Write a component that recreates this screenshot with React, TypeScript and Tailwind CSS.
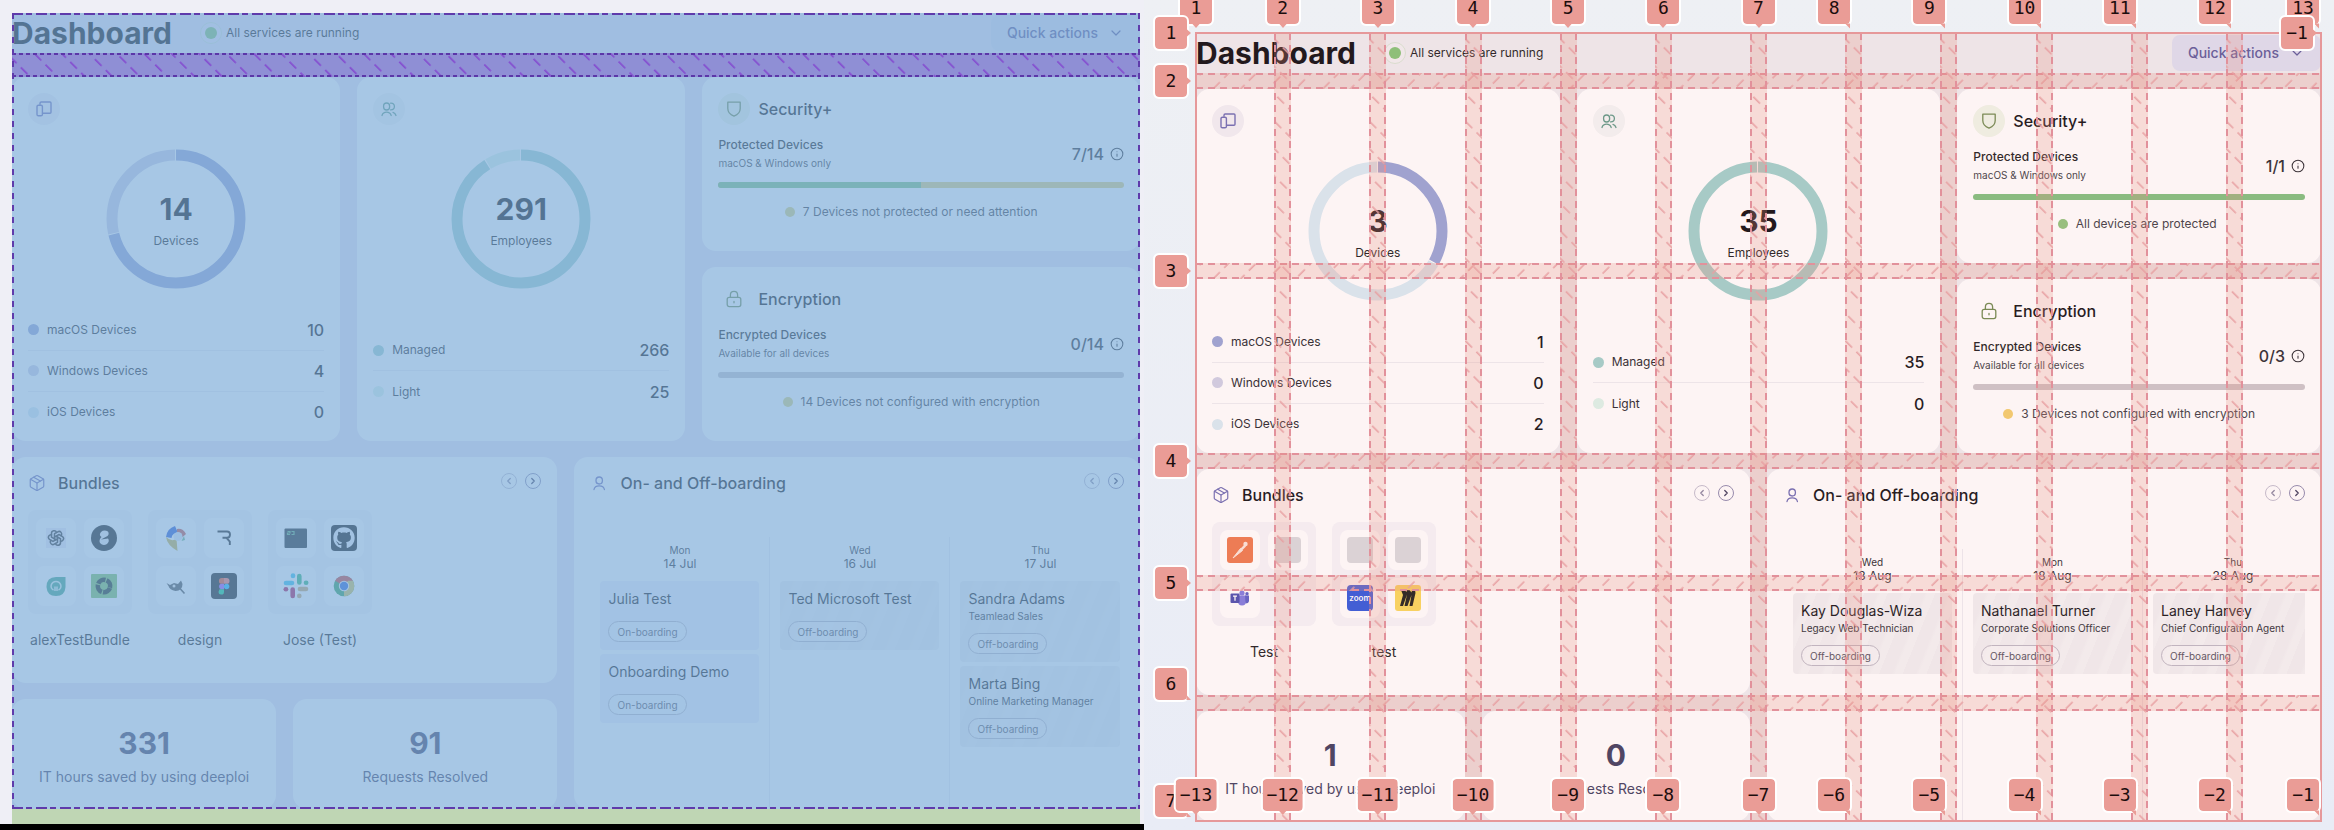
import React, { useId } from "react";
import { ChevronDown, ChevronLeft, ChevronRight, Info, Package } from "lucide-react";
import { FaGithub } from "react-icons/fa";
import { TbBrandOpenai } from "react-icons/tb";

/* ---------- icons ---------- */

const DevicesIcon = () => (
  <svg viewBox="0 0 18 18" className="size-[18px]" fill="none" stroke="#6f6db5" strokeWidth="1.4" strokeLinejoin="round" strokeLinecap="round">
    <path d="M5 4.2V3.2Q5 2 6.2 2H15Q16 2 16 3V12.2Q16 13.2 15 13.2H7.6" />
    <rect x="2" y="5.2" width="5.4" height="10.6" rx="1.4" />
  </svg>
);

const PeopleIcon = () => (
  <svg viewBox="0 0 18 18" className="size-[18px]" fill="none" stroke="#5f9a88" strokeWidth="1.3" strokeLinecap="round">
    <rect x="3.6" y="3" width="6" height="7" rx="3" />
    <path d="M10.6 3.2Q14.4 3 14.4 6.5Q14.4 10 10.6 9.9" />
    <path d="M2 15.5Q3 12.2 6.6 12.2Q10 12.2 11.2 15.5M13 12.4Q15.2 13 16 15.5" />
  </svg>
);

const ShieldIcon = () => (
  <svg viewBox="0 0 18 18" className="size-[18px]" fill="none" stroke="#6f8a4f" strokeWidth="1.3" strokeLinejoin="round">
    <path d="M2.8 2.2H15.2V8.4Q15.2 13.6 9 16.2Q2.8 13.6 2.8 8.4Z" />
  </svg>
);

const LockIcon = () => (
  <svg viewBox="0 0 18 18" className="size-[18px]" fill="none" stroke="#6f8a4f" strokeWidth="1.3" strokeLinecap="round">
    <rect x="2.2" y="7.4" width="13.6" height="9.2" rx="2" />
    <path d="M5.4 7.2V5Q5.4 1.4 9 1.4Q12.6 1.4 12.6 5V7.2M9 11.4V12.8" />
  </svg>
);

const PersonIcon = () => (
  <svg viewBox="0 0 18 18" className="size-[18px]" fill="none" stroke="#6f6db5" strokeWidth="1.3" strokeLinecap="round">
    <rect x="6" y="3" width="6.4" height="7" rx="3.2" />
    <path d="M4 15.5Q4.6 11.8 9.2 11.8Q13.8 11.8 14.4 15.5" />
  </svg>
);

/* ---------- app logos ---------- */

const Svg = ({ children }: { children: React.ReactNode }) => (
  <svg viewBox="0 0 26 26" className="size-[26px]">{children}</svg>
);

const logos: Record<string, React.ReactNode> = {
  openai: (
    <span className="flex size-5 items-center justify-center bg-[#eceaf5]"><TbBrandOpenai className="size-[18px] text-[#333]" /></span>
  ),
  knot: (
    <Svg>
      <circle cx="13" cy="13" r="13" fill="#151515" />
      <path d="M17 6.5Q13 4.5 10 7Q7.500 10 10.500 12Q7.500 15 9 18Q12 21.500 16 19Q19 16 17 13.500L10 14.500L16.500 11Q18.500 9 17 6.500Z" fill="#e9e9ef" />
    </Svg>
  ),
  leaf: (
    <Svg>
      <path d="M3.500 14Q3.500 4 13 4H22.500V14Q22 23 13 23Q4 23 3.500 14Z" fill="#3fa38b" />
      <path d="M10.500 17Q7.500 15.500 8.200 12Q9.500 8.500 13 8.500Q16.500 8.500 17.800 12Q18.500 15.500 15.500 17M12 18V13.500M14 18V13.500" fill="none" stroke="#d9f1ea" strokeWidth="1.500" />
    </Svg>
  ),
  ring: (
    <Svg>
      <rect y="1" width="26" height="24" rx="1" fill="#7cc060" />
      <circle cx="13" cy="13" r="6.200" fill="none" stroke="#1a2a1d" strokeWidth="4.600" strokeDasharray="8.500 1.240" transform="rotate(18 13 13)" />
    </Svg>
  ),
  drop: (
    <Svg>
      <path d="M3 12Q4 3.500 12 1L15 8Q9 8 8.500 13Z" fill="#2a5bd7" />
      <path d="M14 4Q20 3 23 9L19 12.500L14 8Z" fill="#c8524a" />
      <path d="M3 12Q8 17 13.500 14L14.500 26Q4 20 3 12Z" fill="#c9b44c" />
      <circle cx="15" cy="11.500" r="4.500" fill="#dfe8f5" />
      <path d="M21 11L22 15L18.500 16Z" fill="#6fb68a" />
    </Svg>
  ),
  r: (
    <Svg>
      <path d="M6.500 6.500H16Q19 6.500 19 9.500Q19 12.800 16 12.800H11.500M15.500 12.800L18.800 16.500V20" fill="none" stroke="#1d1d1d" strokeWidth="1.900" />
    </Svg>
  ),
  gimp: (
    <Svg>
      <path d="M3.500 10L7 12L11 10L15 11L18 7.500L19.500 11Q19.500 17.500 12.500 18Q6.500 17 5.500 13Z" fill="#4c4c4c" />
      <circle cx="11" cy="13" r="1.500" fill="#eee" />
      <path d="M17 15.500L21.500 20.500" stroke="#4c4c4c" strokeWidth="1.600" />
    </Svg>
  ),
  figma: (
    <Svg>
      <rect width="26" height="26" rx="4" fill="#151515" />
      <path d="M13 5H10.800A2.900 2.900 0 0 0 10.800 10.800H13Z" fill="#f24e1e" />
      <path d="M13 5H15.600A2.900 2.900 0 0 1 15.600 10.800H13Z" fill="#ff7262" />
      <path d="M13 10.800H10.800A2.700 2.700 0 0 0 10.800 16.200H13Z" fill="#a259ff" />
      <circle cx="15.600" cy="13.500" r="2.700" fill="#1abcfe" />
      <path d="M13 16.200H10.800A2.700 2.700 0 1 0 13 18.900Z" fill="#0acf83" />
    </Svg>
  ),
  terminal: (
    <Svg>
      <rect x="1.500" y="3.500" width="22.500" height="19.500" rx="1" fill="#1f2426" />
      <path d="M4.500 6.500H7V8H4.500V9.500H7M8.500 6.500H11V9.500H8.500" fill="none" stroke="#5fae7b" strokeWidth="1.200" />
    </Svg>
  ),
  github: (
    <span className="flex size-[26px] items-center justify-center rounded bg-[#111]"><FaGithub className="size-[22px] text-[#f1f1f6]" /></span>
  ),
  slack: (
    <Svg>
      <g strokeWidth="4.600" strokeLinecap="round">
        <path d="M3 10H9" stroke="#36c5f0" />
        <path d="M10 2.600V3" stroke="#36c5f0" />
        <path d="M16.300 3V9.500" stroke="#2eb67d" />
        <path d="M23.200 9.700H23" stroke="#2eb67d" />
        <path d="M17 16H23" stroke="#c9a56a" />
        <path d="M16.300 23V22.800" stroke="#c9a56a" />
        <path d="M9.700 16.500V23" stroke="#b01555" />
        <path d="M2.800 16.200H3" stroke="#b01555" />
      </g>
    </Svg>
  ),
  chrome: (
    <Svg>
      <circle cx="13" cy="13" r="10.300" fill="#2f9e5b" />
      <path d="M4.100 7.850A10.300 10.300 0 0 1 21.900 7.850L13 13Z" fill="#cf4238" />
      <path d="M21.900 7.850A10.300 10.300 0 0 1 13 23.300L13 13L17 7.850Z" fill="#d6c35a" />
      <circle cx="13" cy="13" r="5.200" fill="#f4f4fa" />
      <circle cx="13" cy="13" r="4.200" fill="#2a63dd" />
    </Svg>
  ),
  postman: (
    <Svg>
      <rect width="26" height="26" rx="3" fill="#ee7a4f" />
      <path d="M6 21L13.500 11.500L15.500 13.500Z" fill="#fbe6dc" stroke="#fbe6dc" strokeLinejoin="round" />
      <path d="M13.200 12L17.500 7.500L19 9.500L15 13.500Z" fill="#fbe6dc" />
      <circle cx="18.500" cy="7" r="2.200" fill="#fbe6dc" />
    </Svg>
  ),
  blank: <span className="size-[26px] rounded bg-[#dadadd]" />,
  teams: (
    <Svg>
      <circle cx="15" cy="8" r="2.600" fill="#7f7ce0" />
      <circle cx="20" cy="8.800" r="1.700" fill="#5b5fc7" />
      <path d="M11 10.500H19V16Q19 20.500 15 20.500Q11 20.500 11 16Z" fill="#7f7ce0" />
      <path d="M18 10.500H22V16Q21.500 18.500 18.500 18.500Z" fill="#5b5fc7" />
      <rect x="3.500" y="8.500" width="9" height="9.500" rx="1" fill="#4b4fb0" />
      <path d="M6 11.200H10M8 11.200V15.800" stroke="#fff" strokeWidth="1.300" />
    </Svg>
  ),
  zoom: (
    <span className="flex size-[26px] items-center justify-center rounded bg-[#3059dc] text-[8px] font-semibold text-white">zoom</span>
  ),
  miro: (
    <Svg>
      <rect width="26" height="26" rx="3" fill="#fad85c" />
      <path d="M6 5H9.500L11.500 7L12 5H14.500L16.500 7.500L17 5H20L20.500 8L17.500 21H14.500L16.500 10L12.500 21H9.500L12 9.500L8 21H5L8 10Z" fill="#20201c" />
    </Svg>
  ),
};

/* ---------- dashboard data ---------- */

type Segment = { label: string; value: number; color: string };
type Employee = { name: string; role?: string; kind: "On-boarding" | "Off-boarding" };
type Coverage = { title: string; label: string; hint: string; ratio: string; share: number; track: string; dot: string; note: string };
type Data = {
  columns: string;
  lower: string;
  devices: Segment[];
  people: Segment[];
  security: Coverage;
  encryption: Coverage;
  bundles: { name: string; apps: (string | null)[] }[];
  days: { day: string; date: string; entries: Employee[] }[];
  hours: number;
  resolved: number;
};

const devices = (mac: number, win: number, ios: number): Segment[] => [
  { label: "macOS Devices", value: mac, color: "#98a4d6" },
  { label: "Windows Devices", value: win, color: "#cfd0e6" },
  { label: "iOS Devices", value: ios, color: "#d8ebf4" },
];
const people = (managed: number, light: number): Segment[] => [
  { label: "Managed", value: managed, color: "#a0d1cc" },
  { label: "Light", value: light, color: "#dcf4ea" },
];

const large: Data = {
  columns: "grid-cols-[3fr_3fr_4fr]",
  lower: "grid-cols-[545fr_565fr]",
  devices: devices(10, 4, 0),
  people: people(266, 25),
  security: { title: "Security+", label: "Protected Devices", hint: "macOS & Windows only", ratio: "7/14", share: 50, track: "bg-[#e0cf7c]", dot: "bg-[#dcd27c]", note: "7 Devices not protected or need attention" },
  encryption: { title: "Encryption", label: "Encrypted Devices", hint: "Available for all devices", ratio: "0/14", share: 0, track: "bg-[#c6c3c9]", dot: "bg-[#dcd27c]", note: "14 Devices not configured with encryption" },
  bundles: [
    { name: "alexTestBundle", apps: ["openai", "knot", "leaf", "ring"] },
    { name: "design", apps: ["drop", "r", "gimp", "figma"] },
    { name: "Jose (Test)", apps: ["terminal", "github", "slack", "chrome"] },
  ],
  days: [
    { day: "Mon", date: "14 Jul", entries: [{ name: "Julia Test", kind: "On-boarding" }, { name: "Onboarding Demo", kind: "On-boarding" }] },
    { day: "Wed", date: "16 Jul", entries: [{ name: "Ted Microsoft Test", kind: "Off-boarding" }] },
    { day: "Thu", date: "17 Jul", entries: [{ name: "Sandra Adams", role: "Teamlead Sales", kind: "Off-boarding" }, { name: "Marta Bing", role: "Online Marketing Manager", kind: "Off-boarding" }] },
  ],
  hours: 331,
  resolved: 91,
};

const small: Data = {
  columns: "grid-cols-3",
  lower: "grid-cols-2",
  devices: devices(1, 0, 2),
  people: people(35, 0),
  security: { title: "Security+", label: "Protected Devices", hint: "macOS & Windows only", ratio: "1/1", share: 100, track: "bg-[#8fc47c]", dot: "bg-[#8fc47c]", note: "All devices are protected" },
  encryption: { title: "Encryption", label: "Encrypted Devices", hint: "Available for all devices", ratio: "0/3", share: 0, track: "bg-[#ccc6ca]", dot: "bg-[#f3cf6c]", note: "3 Devices not configured with encryption" },
  bundles: [
    { name: "Test", apps: ["postman", "blank", "teams", null] },
    { name: "test", apps: ["blank", "blank", "zoom", "miro"] },
  ],
  days: [
    { day: "Wed", date: "13 Aug", entries: [{ name: "Kay Douglas-Wiza", role: "Legacy Web Technician", kind: "Off-boarding" }] },
    { day: "Mon", date: "18 Aug", entries: [{ name: "Nathanael Turner", role: "Corporate Solutions Officer", kind: "Off-boarding" }] },
    { day: "Thu", date: "28 Aug", entries: [{ name: "Laney Harvey", role: "Chief Configuration Agent", kind: "Off-boarding" }] },
  ],
  hours: 1,
  resolved: 0,
};

/* ---------- dashboard parts ---------- */

function Donut({ segments, label }: { segments: Segment[]; label: string }) {
  const total = segments.reduce((sum, s) => sum + s.value, 0);
  let start = 0;
  return (
    <div className="relative mx-auto size-[140px]">
      <svg viewBox="0 0 140 140" className="size-full -rotate-90">
        {segments.filter((s) => s.value > 0).map((s) => {
          const from = start;
          const share = (s.value / total) * 100;
          start += share;
          return (
            <circle key={s.label} cx="70" cy="70" r="64" fill="none" stroke={s.color} strokeWidth="11" pathLength="100" strokeDasharray={`${share - 0.25} 100`} strokeDashoffset={-from} />
          );
        })}
      </svg>
      <div className="absolute inset-0 flex flex-col items-center justify-center">
        <span className="text-[30px] leading-10 font-bold text-[#0c0c10]">{total}</span>
        <span className="mt-1 text-[12px] leading-4 text-[#1b1b20]">{label}</span>
      </div>
    </div>
  );
}

function DonutCard({ segments, label, icon, tint }: { segments: Segment[]; label: string; icon: React.ReactNode; tint: string }) {
  return (
    <section className="flex min-w-0 flex-col rounded-[14px] bg-white px-4 pt-4 pb-2">
      <span className={`flex size-8 items-center justify-center rounded-full ${tint}`}>{icon}</span>
      <div className="mt-6">
        <Donut segments={segments} label={label} />
      </div>
      <ul className="mt-5 flex flex-1 flex-col justify-center divide-y divide-[#eeeef2]">
        {segments.map((s) => (
          <li key={s.label} className="flex h-[41px] items-center gap-2">
            <span className="size-[11px] rounded-full" style={{ backgroundColor: s.color }} />
            <span className="flex-1 text-[12px] leading-4 text-[#26262c]">{s.label}</span>
            <span className="text-[16px] leading-5 font-medium text-[#101014]">{s.value}</span>
          </li>
        ))}
      </ul>
    </section>
  );
}

function CoverageCard({ data, icon, tint }: { data: Coverage; icon: React.ReactNode; tint: string }) {
  return (
    <section className="min-h-[174px] rounded-[14px] bg-white px-4 pt-4 pb-6">
      <div className="flex items-center gap-2">
        <span className={`flex size-8 items-center justify-center rounded-full ${tint}`}>{icon}</span>
        <h2 className="text-[16px] leading-5 font-medium text-[#101014]">{data.title}</h2>
      </div>
      <div className="mt-[11px] flex items-center justify-between">
        <div>
          <p className="text-[12px] leading-[18px] font-medium text-[#1b1b20]">{data.label}</p>
          <p className="text-[10px] leading-[18px] text-[#3c3c44]">{data.hint}</p>
        </div>
        <div className="flex items-center gap-1.5">
          <span className="text-[16px] leading-5 font-medium text-[#2a2a30]">{data.ratio}</span>
          <Info className="size-[14px] text-[#2a2a30]" strokeWidth={1.8} />
        </div>
      </div>
      <div className={`mt-2.5 h-1.5 overflow-hidden rounded-full ${data.track}`}>
        <div className="h-full bg-[#7fc07e]" style={{ width: `${data.share}%` }} />
      </div>
      <p className={`mt-3.5 flex items-center justify-center gap-2 text-[12px] leading-5 text-[#3c3c44] ${data.share < 100 ? "pr-5" : "pr-1"}`}>
        <span className={`size-2.5 rounded-full ${data.dot}`} />
        {data.note}
      </p>
    </section>
  );
}

function CardHeader({ title, icon }: { title: string; icon: React.ReactNode }) {
  return (
    <div className="flex items-start justify-between">
      <div className="flex items-center gap-3">
        {icon}
        <h2 className="text-[16px] leading-5 font-medium text-[#101014]">{title}</h2>
      </div>
      <div className="flex gap-2">
        <button type="button" aria-label={`Previous ${title}`} className="flex size-4 items-center justify-center rounded-full border border-[#c3bfd0] text-[#8a86a0]">
          <ChevronLeft className="size-2.5" strokeWidth={3} />
        </button>
        <button type="button" aria-label={`Next ${title}`} className="flex size-4 items-center justify-center rounded-full border border-[#8f8bb0] text-[#3f3c5c]">
          <ChevronRight className="size-2.5" strokeWidth={3} />
        </button>
      </div>
    </div>
  );
}

function Stat({ value, label }: { value: number; label: string }) {
  return (
    <section className="flex min-h-[110px] flex-col items-center rounded-[14px] bg-white pt-6 text-[#3f3d5e]">
      <span className="text-[30px] leading-10 font-bold">{value}</span>
      <span className="mt-1 text-[14px] leading-5 whitespace-nowrap">{label}</span>
    </section>
  );
}

function Onboarding({ days }: { days: Data["days"] }) {
  return (
    <section className="flex min-w-0 flex-col rounded-[14px] bg-white px-4 pt-4">
      <CardHeader title="On- and Off-boarding" icon={<PersonIcon />} />
      <div className="mt-11 flex flex-1 divide-x divide-[#eeecf2] overflow-hidden">
        {days.map((d) => (
          <div key={d.date} className="w-[180px] shrink-0 px-2.5 pt-1.5">
            <div className="text-center text-[#2a2a30]">
              <p className="text-[10px] leading-3.5">{d.day}</p>
              <p className="text-[12px] leading-3.5">{d.date}</p>
            </div>
            <ul className="mt-2.5 flex flex-col gap-1">
              {d.entries.map((e) => (
                <li
                  key={e.name}
                  className={`rounded px-2 pt-2 pb-2 ${
                    e.kind === "Off-boarding"
                      ? "bg-[repeating-linear-gradient(112deg,#f1f0f2_0px,#f1f0f2_12px,#f4f4f5_15px,#f4f4f5_22px)]"
                      : "bg-[#eff1fb]"
                  }`}
                >
                  <p className="text-[14px] leading-5 whitespace-nowrap text-[#141418]">{e.name}</p>
                  {e.role && <p className="text-[10px] leading-3.5 whitespace-nowrap text-[#2f2f36]">{e.role}</p>}
                  <span className={`flex h-[21px] w-fit items-center rounded-full border border-[#bdb8c4] bg-white/30 px-2 text-[10px] leading-3.5 text-[#55525e] ${e.role ? "mt-2.5" : "mt-3"}`}>
                    {e.kind}
                  </span>
                </li>
              ))}
            </ul>
          </div>
        ))}
      </div>
    </section>
  );
}

function DashboardHeader() {
  return (
    <header className="flex h-10 items-center justify-between">
      <div className="flex items-center">
        <h1 className="text-[30px] leading-10 font-bold text-[#0c0c10]">Dashboard</h1>
        <span className="ml-7 flex size-[22px] items-center justify-center rounded-full border border-[#d9e6d6] bg-white/20">
          <span className="size-3 rounded-full bg-[#84c476]" />
        </span>
        <span className="ml-1 text-[12px] leading-5 text-[#1b1b20]">All services are running</span>
      </div>
      <button type="button" className="flex h-9 items-center gap-2.5 rounded-lg bg-[#dedff1] px-4 text-[14px] leading-5 font-medium text-[#5d5a9a]">
        Quick actions
        <ChevronDown className="size-4" strokeWidth={1.8} />
      </button>
    </header>
  );
}

function DashboardBody({ data }: { data: Data }) {
  return (
    <div className="flex flex-col gap-4">
      <div className={`grid gap-x-[17px] ${data.columns}`}>
        <DonutCard segments={data.devices} label="Devices" icon={<DevicesIcon />} tint="bg-[#f2f1f7]" />
        <DonutCard segments={data.people} label="Employees" icon={<PeopleIcon />} tint="bg-[#f4f6f6]" />
        <div className="flex flex-col gap-4">
          <CoverageCard data={data.security} icon={<ShieldIcon />} tint="bg-[#f0f6e9]" />
          <CoverageCard data={data.encryption} icon={<LockIcon />} tint="bg-transparent" />
        </div>
      </div>
      <div className={`grid gap-x-[17px] ${data.lower}`}>
        <div className="flex min-w-0 flex-col gap-4">
          <section className="min-h-[226px] rounded-[14px] bg-white px-4 pt-4">
            <CardHeader title="Bundles" icon={<Package className="size-[18px] text-[#6f6db5]" strokeWidth={1.6} />} />
            <div className="mt-[17px] flex gap-4">
              {data.bundles.map((b) => (
                <figure key={b.name} className="flex w-[104px] flex-col items-center">
                  <div className="grid grid-cols-2 gap-2 rounded-lg bg-[#f6f5fa] p-2">
                    {b.apps.map((app, i) => (
                      <span key={i} className={`flex size-10 items-center justify-center rounded-lg ${app ? "bg-white" : ""}`}>
                        {app && logos[app]}
                      </span>
                    ))}
                  </div>
                  <figcaption className="mt-4 text-[14px] leading-5 whitespace-nowrap text-[#1b1b20]">{b.name}</figcaption>
                </figure>
              ))}
            </div>
          </section>
          <div className="grid grid-cols-2 gap-x-[17px]">
            <Stat value={data.hours} label="IT hours saved by using deeploi" />
            <Stat value={data.resolved} label="Requests Resolved" />
          </div>
        </div>
        <Onboarding days={data.days} />
      </div>
    </div>
  );
}

/* ---------- layout inspector overlays ---------- */

function Hatch({ color, angle }: { color: string; angle: number }) {
  const id = useId();
  return (
    <svg className="absolute inset-0 size-full" aria-hidden="true">
      <defs>
        <pattern id={id} width="15.5" height="19.4" patternUnits="userSpaceOnUse" patternTransform={`rotate(${angle})`}>
          <path d="M1 4H10.400" stroke={color} strokeWidth="1.500" />
        </pattern>
      </defs>
      <rect width="100%" height="100%" fill={`url(#${id})`} />
    </svg>
  );
}

function Dashes({ edges, color, dash, width }: { edges: string; color: string; dash: string; width: number }) {
  const shared = { stroke: color, strokeWidth: width * 2, strokeDasharray: dash };
  return (
    <svg className="absolute inset-0 size-full" aria-hidden="true">
      {edges.includes("t") && <line x1="0" y1="0" x2="100%" y2="0" {...shared} />}
      {edges.includes("b") && <line x1="0" y1="100%" x2="100%" y2="100%" {...shared} />}
      {edges.includes("l") && <line x1="0" y1="0" x2="0" y2="100%" {...shared} />}
      {edges.includes("r") && <line x1="100%" y1="0" x2="100%" y2="100%" {...shared} />}
    </svg>
  );
}

function FlexOverlay() {
  return (
    <div className="pointer-events-none absolute inset-0">
      <div className="absolute inset-0 bg-[rgba(122,170,216,0.66)]" />
      <div className="relative mt-10 h-6 bg-[rgba(118,72,195,0.4)]">
        <Hatch color="#8345cf" angle={45} />
        <Dashes edges="tb" color="#5b37a8" dash="4 3" width={2} />
      </div>
      <Dashes edges="tb" color="#5f3bab" dash="11 3 6 4" width={2} />
      <Dashes edges="lr" color="#5f3bab" dash="6 6" width={2} />
    </div>
  );
}

const tail = {
  down: "top-full left-1/2 -translate-x-1/2",
  downRight: "top-full right-0",
  right: "left-full top-1/2 -translate-y-1/2",
  rightLow: "left-full bottom-0",
};

function Tag({ children, place, point }: { children: React.ReactNode; place: string; point: keyof typeof tail }) {
  return (
    <span className={`absolute z-10 flex h-8 min-w-8 items-center justify-center rounded-sm bg-[#ea9c96] px-1 font-['DejaVu_Sans_Mono',monospace] text-[18px] leading-8 text-[#1c0d0d] outline-2 outline-white ${place}`}>
      {children}
      <svg viewBox="0 0 8 8" className={`absolute size-2 overflow-visible ${tail[point]}`} aria-hidden="true">
        {point === "down" && <path d="M0 -0.500H8L4 4Z" fill="#ea9c96" />}
        {point === "downRight" && <path d="M3 -0.500H8V4.500Z" fill="#ea9c96" />}
        {point === "right" && <path d="M-0.500 0V8L4 4Z" fill="#ea9c96" />}
        {point === "rightLow" && <path d="M-0.500 3V8H4Z" fill="#ea9c96" />}
      </svg>
    </span>
  );
}

const rowSizes = ["h-10", "h-[174px]", "h-[174px]", "h-[106px]", "h-[104px]"];

function GridOverlay() {
  const columns = Array.from({ length: 11 }, (_, i) => i + 2);
  return (
    <div className="pointer-events-none absolute inset-0">
      <div className="absolute inset-0 bg-[rgba(232,150,150,0.1)]" />
      <div className="absolute inset-0 flex flex-col">
        {rowSizes.map((size, i) => (
          <React.Fragment key={i}>
            <div className={`shrink-0 ${size}`} />
            <div className="relative h-4 shrink-0 bg-[rgba(233,145,129,0.25)]">
              <Hatch color="#e8a0a2" angle={-45} />
              <Dashes edges="tb" color="#e2919b" dash="7 5" width={2} />
            </div>
          </React.Fragment>
        ))}
      </div>
      <div className="absolute inset-0 flex">
        {columns.map((n) => (
          <React.Fragment key={n}>
            <div className="flex-1" />
            <div className="relative w-[17px] shrink-0 bg-[rgba(233,145,129,0.25)]">
              <Hatch color="#e8a0a2" angle={45} />
              <Dashes edges="lr" color="#e2919b" dash="7 5" width={2} />
            </div>
          </React.Fragment>
        ))}
        <div className="flex-1" />
      </div>
      <div className="absolute -inset-px border-2 border-[#e6989a]" />

      <div className="absolute inset-0 flex flex-col">
        {rowSizes.map((size, i) => (
          <React.Fragment key={i}>
            <div className={`shrink-0 ${size}`} />
            <div className="relative h-4 shrink-0">
              <Tag place={i === 4 ? "right-full mr-[9px] bottom-[11px]" : "right-full mr-[9px] -top-2"} point={i === 4 ? "rightLow" : "right"}>
                {i + 2}
              </Tag>
            </div>
          </React.Fragment>
        ))}
      </div>
      <Tag place="right-full mr-[9px] bottom-1" point="rightLow">7</Tag>
      <div className="absolute inset-0 flex">
        {columns.map((n) => (
          <React.Fragment key={n}>
            <div className="flex-1" />
            <div className="relative w-[17px] shrink-0">
              <Tag place={n < 8 ? "bottom-full mb-[9px] left-1/2 -translate-x-1/2" : "bottom-full mb-[9px] right-3"} point={n < 8 ? "down" : "downRight"}>
                {n}
              </Tag>
              <Tag place={n < 8 ? "bottom-2.5 left-1/2 -translate-x-1/2" : "bottom-2.5 right-3"} point={n < 8 ? "down" : "downRight"}>
                {`−${14 - n}`}
              </Tag>
            </div>
          </React.Fragment>
        ))}
        <div className="flex-1" />
      </div>
      <Tag place="bottom-full mb-[9px] left-0 -translate-x-1/2" point="down">1</Tag>
      <Tag place="bottom-2.5 left-0 -translate-x-1/2" point="down">−13</Tag>
      <Tag place="bottom-full mb-[9px] right-0.5" point="downRight">13</Tag>
      <Tag place="bottom-2.5 right-0.5" point="downRight">−1</Tag>
      <Tag place="right-full mr-[9px] -top-4" point="right">1</Tag>
      <Tag place="right-2 -top-4" point="right">−1</Tag>
    </div>
  );
}

export default function App() {
  return (
    <main className="grid min-h-screen grid-cols-[1144fr_1190fr] bg-[#eceff5] font-['Inter','Liberation_Sans',sans-serif]">
      <div className="flex min-w-0 flex-col bg-[#efeff6]">
        <div className="pt-[13px] pr-1 pl-3">
          <div className="relative bg-[#e9e3f4]">
            <DashboardHeader />
            <div className="mt-6">
              <DashboardBody data={large} />
            </div>
            <FlexOverlay />
          </div>
          <div className="h-[15px] bg-[#bfd6b4]" />
        </div>
        <div className="flex-1 bg-black" />
      </div>
      <div className="min-w-0 bg-linear-to-b from-[#eef0f4] to-[#e9ecf6] pt-[33px] pr-[13px] pl-[52px]">
        <div className="relative bg-[#efeef1]">
          <DashboardHeader />
          <div className="mt-4">
            <DashboardBody data={small} />
          </div>
          <GridOverlay />
        </div>
      </div>
    </main>
  );
}
